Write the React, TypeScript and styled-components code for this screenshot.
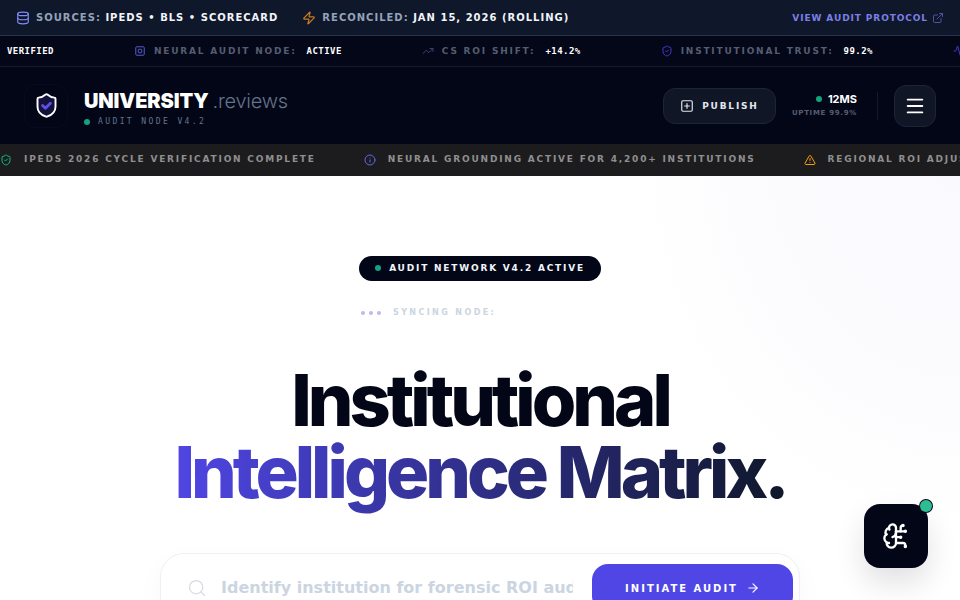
import React from "react";
import styled, { createGlobalStyle } from "styled-components";
import {
  Database, Zap, ExternalLink, TrendingUp, ShieldCheck, Activity, Info,
  TriangleAlert, SquarePlus, Menu, Search, ArrowRight, BrainCircuit,
} from "lucide-react";

const Global = createGlobalStyle`
  html, body { margin: 0; padding: 0; height: 100%; overflow: hidden; background: #fff; }
  body { font-family: "DejaVu Sans", sans-serif; }
  * { box-sizing: border-box; }
`;

const Page = styled.div`
  width: 960px;
  height: 600px;
  overflow: hidden;
  position: relative;
  background:
    radial-gradient(ellipse 320px 380px at 100% 25%, #faf9fe 0%, #fbfbfe 55%, rgba(255, 255, 255, 0) 100%),
    #fff;
`;

const SourceBar = styled.div`
  height: 36px;
  padding: 0 16px;
  background: #0f172a;
  border-bottom: 1px solid #293349;
  display: flex;
  align-items: center;
  justify-content: space-between;
  font-size: 10px;
  font-weight: 700;
  letter-spacing: 1px;
  white-space: nowrap;
`;
const SourceGroup = styled.div`
  display: flex;
  align-items: center;
  gap: 24px;
`;
const SourceItem = styled.div`
  display: flex;
  align-items: center;
  gap: 6px;
  color: #94a3b8;
`;
const Strong = styled.span`
  color: #f1f5f9;
`;
const ProtocolLink = styled.a`
  display: flex;
  align-items: center;
  gap: 4px;
  font-size: 9px;
  color: #7b7fe6;
  letter-spacing: 0.9px;
`;

const TickerBar = styled.div`
  height: 31px;
  background: #040718;
  border-bottom: 1px solid #151a2c;
  display: flex;
  align-items: center;
  padding-left: 7px;
  white-space: nowrap;
  overflow: hidden;
`;
const TickerValue = styled.span`
  font-family: "DejaVu Sans Mono", monospace;
  font-size: 9px;
  font-weight: 700;
  letter-spacing: 0.45px;
  color: #fff;
`;
const TickerItem = styled.div`
  display: flex;
  align-items: center;
  flex: none;
  margin-left: 80px;
  gap: 8px;
`;
const TickerLabel = styled.span`
  font-size: 9px;
  font-weight: 700;
  letter-spacing: 1.8px;
  color: #565d70;
  margin-right: 2px;
`;

const Header = styled.header`
  height: 77px;
  background: #020617;
  display: flex;
  align-items: center;
  justify-content: space-between;
  padding: 0 24px;
`;
const Brand = styled.div`
  display: flex;
  align-items: center;
  gap: 16px;
`;
const LogoBox = styled.div`
  width: 44px;
  height: 44px;
  display: flex;
  align-items: center;
  justify-content: center;
  border-radius: 12px;
  border: 1px solid #070b1c;
`;
const BrandText = styled.div`
  display: flex;
  flex-direction: column;
  gap: 1px;
  padding-top: 3px;
`;
const Wordmark = styled.div`
  font-family: "Inter", sans-serif;
  font-size: 20px;
  line-height: 28px;
  font-weight: 900;
  letter-spacing: -0.1px;
  color: #fff;
`;
const WordmarkLight = styled.span`
  font-weight: 300;
  color: #64748b;
  margin-left: 4px;
  letter-spacing: -0.25px;
`;
const NodeLine = styled.div`
  display: flex;
  align-items: center;
  gap: 8px;
  font-family: "DejaVu Sans Mono", monospace;
  font-size: 8px;
  letter-spacing: 2.4px;
  color: #64748b;
  line-height: 12px;
`;
const Dot = styled.span<{ $size: number }>`
  width: ${(p) => p.$size}px;
  height: ${(p) => p.$size}px;
  border-radius: 50%;
  background: #14a37f;
  flex: none;
`;
const Actions = styled.div`
  display: flex;
  align-items: center;
`;
const PublishButton = styled.div`
  width: 113px;
  height: 36px;
  border-radius: 12px;
  background: #111626;
  border: 1px solid #1e2436;
  display: flex;
  align-items: center;
  justify-content: center;
  gap: 8px;
  color: #e2e8f0;
  font-size: 9px;
  font-weight: 700;
  letter-spacing: 1.8px;
`;
const Latency = styled.div`
  display: flex;
  flex-direction: column;
  align-items: flex-end;
  gap: 1px;
  margin-left: 16px;
  padding-right: 20px;
  margin-right: 16px;
  border-right: 1px solid #141827;
  height: 28px;
  justify-content: center;
`;
const LatencyValue = styled.div`
  display: flex;
  align-items: center;
  gap: 6px;
  font-family: "Inter", sans-serif;
  font-size: 11px;
  font-weight: 700;
  color: #fff;
  line-height: 14px;
`;
const Uptime = styled.div`
  font-size: 7px;
  font-weight: 700;
  letter-spacing: 0.7px;
  color: #565d70;
  line-height: 12px;
`;
const MenuButton = styled.div`
  width: 42px;
  height: 42px;
  border-radius: 12px;
  background: #111626;
  border: 1px solid #1e2436;
  color: #fff;
  display: flex;
  align-items: center;
  justify-content: center;
`;

const Announce = styled.div`
  height: 32px;
  padding-bottom: 3px;
  background: #1c1c1e;
  display: flex;
  align-items: center;
  white-space: nowrap;
  overflow: hidden;
  font-size: 9px;
  font-weight: 700;
  letter-spacing: 1.8px;
  color: #8f8f8f;
`;
const AnnounceItem = styled.div`
  display: flex;
  align-items: center;
  gap: 12px;
  flex: none;
  margin-right: 48px;
  svg { position: relative; top: 1px; }
`;

const Hero = styled.main`
  display: flex;
  flex-direction: column;
  align-items: center;
  padding-top: 80px;
`;
const NetworkPill = styled.div`
  height: 25px;
  width: 242px;
  padding-bottom: 1px;
  border-radius: 13px;
  background: #020617;
  display: flex;
  align-items: center;
  justify-content: center;
  gap: 8px;
  color: #f1f5f9;
  font-size: 9px;
  font-weight: 700;
  letter-spacing: 1.8px;
`;
const SyncRow = styled.div`
  margin-top: 25px;
  width: 242px;
  padding-left: 2px;
  display: flex;
  align-items: center;
  gap: 12px;
  font-size: 8px;
  font-weight: 700;
  letter-spacing: 2.4px;
  color: #cbd5e1;
  line-height: 14px;
`;
const SyncDots = styled.div`
  display: flex;
  gap: 4px;
  align-items: center;
`;
const SyncDot = styled.span`
  width: 4px;
  height: 4px;
  border-radius: 50%;
  background: #c0b8ec;
`;
const Title = styled.h1`
  margin: 44px 0 0;
  font-family: "Inter", sans-serif;
  font-size: 72px;
  line-height: 72px;
  font-weight: 800;
  letter-spacing: -4px;
  text-align: center;
  color: #020617;
  white-space: nowrap;
`;
const TitleAccent = styled.span`
  display: block;
  background: linear-gradient(90deg, #4f46e5, #0f172a);
  -webkit-background-clip: text;
  background-clip: text;
  color: transparent;
  padding-bottom: 10px;
`;
const SearchBox = styled.div`
  margin-top: 35px;
  width: 640px;
  height: 70px;
  flex: none;
  border: 1px solid #eef0f5;
  border-radius: 24px;
  background: #fff;
  display: flex;
  align-items: center;
  padding: 0 6px 0 26px;
  box-shadow: 0 10px 30px rgba(15, 23, 42, 0.03);
`;
const SearchIcon = styled.div`
  color: #d5dbe3;
  display: flex;
  align-items: center;
`;
const Placeholder = styled.div`
  width: 352px;
  margin-left: 14px;
  overflow: hidden;
  white-space: nowrap;
  font-size: 16px;
  font-weight: 700;
  line-height: 44px;
  color: #cbd5e1;
`;
const AuditButton = styled.div`
  margin-left: 19px;
  width: 201px;
  height: 48px;
  border-radius: 16px;
  background: #4f46e5;
  color: #fff;
  display: flex;
  align-items: center;
  justify-content: center;
  gap: 8px;
  font-size: 10px;
  font-weight: 700;
  letter-spacing: 2px;
`;
const Fab = styled.div`
  position: absolute;
  left: 864px;
  top: 504px;
  width: 64px;
  height: 64px;
  border-radius: 16px;
  background: #020617;
  color: #fff;
  display: flex;
  align-items: center;
  justify-content: center;
  box-shadow: 0 15px 30px rgba(2, 6, 23, 0.12);
`;
const FabBadge = styled.span`
  position: absolute;
  top: -4px;
  right: -4px;
  width: 12px;
  height: 12px;
  border-radius: 50%;
  background: #2ebd93;
  box-shadow: 0 0 0 1px #020617;
`;

const LogoMark = () => (
  <svg width="27" height="27" viewBox="0 0 24 24" fill="none" strokeLinecap="round" strokeLinejoin="round">
    <path
      d="M20 13c0 5-3.5 7.5-7.66 8.95a1 1 0 0 1-.67-.01C7.5 20.5 4 18 4 13V6a1 1 0 0 1 1-1c2 0 4.5-1.2 6.24-2.72a1.17 1.17 0 0 1 1.52 0C14.51 3.81 17 5 19 5a1 1 0 0 1 1 1z"
      fill="#14123a"
      stroke="#fff"
      strokeWidth="1.7"
    />
    <path d="m8.5 12 2.5 2.5 4.5-4.5" stroke="#5b50e8" strokeWidth="2.5" />
  </svg>
);

const ChipIcon = () => (
  <svg width="12" height="12" viewBox="0 0 24 24" fill="none" stroke="#5558c8" strokeWidth="2">
    <rect x="3.5" y="3.5" width="17" height="17" rx="2" />
    <rect x="8.5" y="8.5" width="7" height="7" rx="1" />
  </svg>
);

export default function App() {
  return (
    <Page>
      <Global />
      <SourceBar>
        <SourceGroup>
          <SourceItem>
            <Database size={14} color="#818cf8" />
            <span>SOURCES: <Strong>IPEDS • BLS • SCORECARD</Strong></span>
          </SourceItem>
          <SourceItem>
            <Zap size={14} color="#c77d22" />
            <span>RECONCILED: <Strong>JAN 15, 2026 (ROLLING)</Strong></span>
          </SourceItem>
        </SourceGroup>
        <ProtocolLink>VIEW AUDIT PROTOCOL <ExternalLink size={12} color="#4f52a0" /></ProtocolLink>
      </SourceBar>
      <TickerBar>
        <TickerValue>VERIFIED</TickerValue>
        <TickerItem>
          <ChipIcon />
          <TickerLabel>NEURAL AUDIT NODE:</TickerLabel>
          <TickerValue>ACTIVE</TickerValue>
        </TickerItem>
        <TickerItem>
          <TrendingUp size={12} color="#3f3f70" />
          <TickerLabel>CS ROI SHIFT:</TickerLabel>
          <TickerValue>+14.2%</TickerValue>
        </TickerItem>
        <TickerItem>
          <ShieldCheck size={12} color="#4338ca" />
          <TickerLabel>INSTITUTIONAL TRUST:</TickerLabel>
          <TickerValue>99.2%</TickerValue>
        </TickerItem>
        <TickerItem>
          <Activity size={12} color="#4338ca" />
        </TickerItem>
      </TickerBar>
      <Header>
        <Brand>
          <LogoBox><LogoMark /></LogoBox>
          <BrandText>
            <Wordmark>UNIVERSITY<WordmarkLight>.reviews</WordmarkLight></Wordmark>
            <NodeLine><Dot $size={6} />AUDIT NODE V4.2</NodeLine>
          </BrandText>
        </Brand>
        <Actions>
          <PublishButton><SquarePlus size={14} />PUBLISH</PublishButton>
          <Latency>
            <LatencyValue><Dot $size={6} />12MS</LatencyValue>
            <Uptime>UPTIME 99.9%</Uptime>
          </Latency>
          <MenuButton><Menu size={22} /></MenuButton>
        </Actions>
      </Header>
      <Announce>
        <AnnounceItem><ShieldCheck size={12} color="#10b981" />IPEDS 2026 CYCLE VERIFICATION COMPLETE</AnnounceItem>
        <AnnounceItem><Info size={12} color="#6366f1" />NEURAL GROUNDING ACTIVE FOR 4,200+ INSTITUTIONS</AnnounceItem>
        <AnnounceItem><TriangleAlert size={12} color="#f59e0b" />REGIONAL ROI ADJUSTMENTS APPLIED</AnnounceItem>
      </Announce>
      <Hero>
        <NetworkPill><Dot $size={6} />AUDIT NETWORK V4.2 ACTIVE</NetworkPill>
        <SyncRow>
          <SyncDots><SyncDot /><SyncDot /><SyncDot /></SyncDots>
          SYNCING NODE:
        </SyncRow>
        <Title>
          Institutional
          <TitleAccent>Intelligence Matrix.</TitleAccent>
        </Title>
        <SearchBox>
          <SearchIcon><Search size={20} strokeWidth={1.5} /></SearchIcon>
          <Placeholder>Identify institution for forensic ROI audit</Placeholder>
          <AuditButton>INITIATE AUDIT <ArrowRight size={14} /></AuditButton>
        </SearchBox>
      </Hero>
      <Fab>
        <BrainCircuit size={28} />
        <FabBadge />
      </Fab>
    </Page>
  );
}
